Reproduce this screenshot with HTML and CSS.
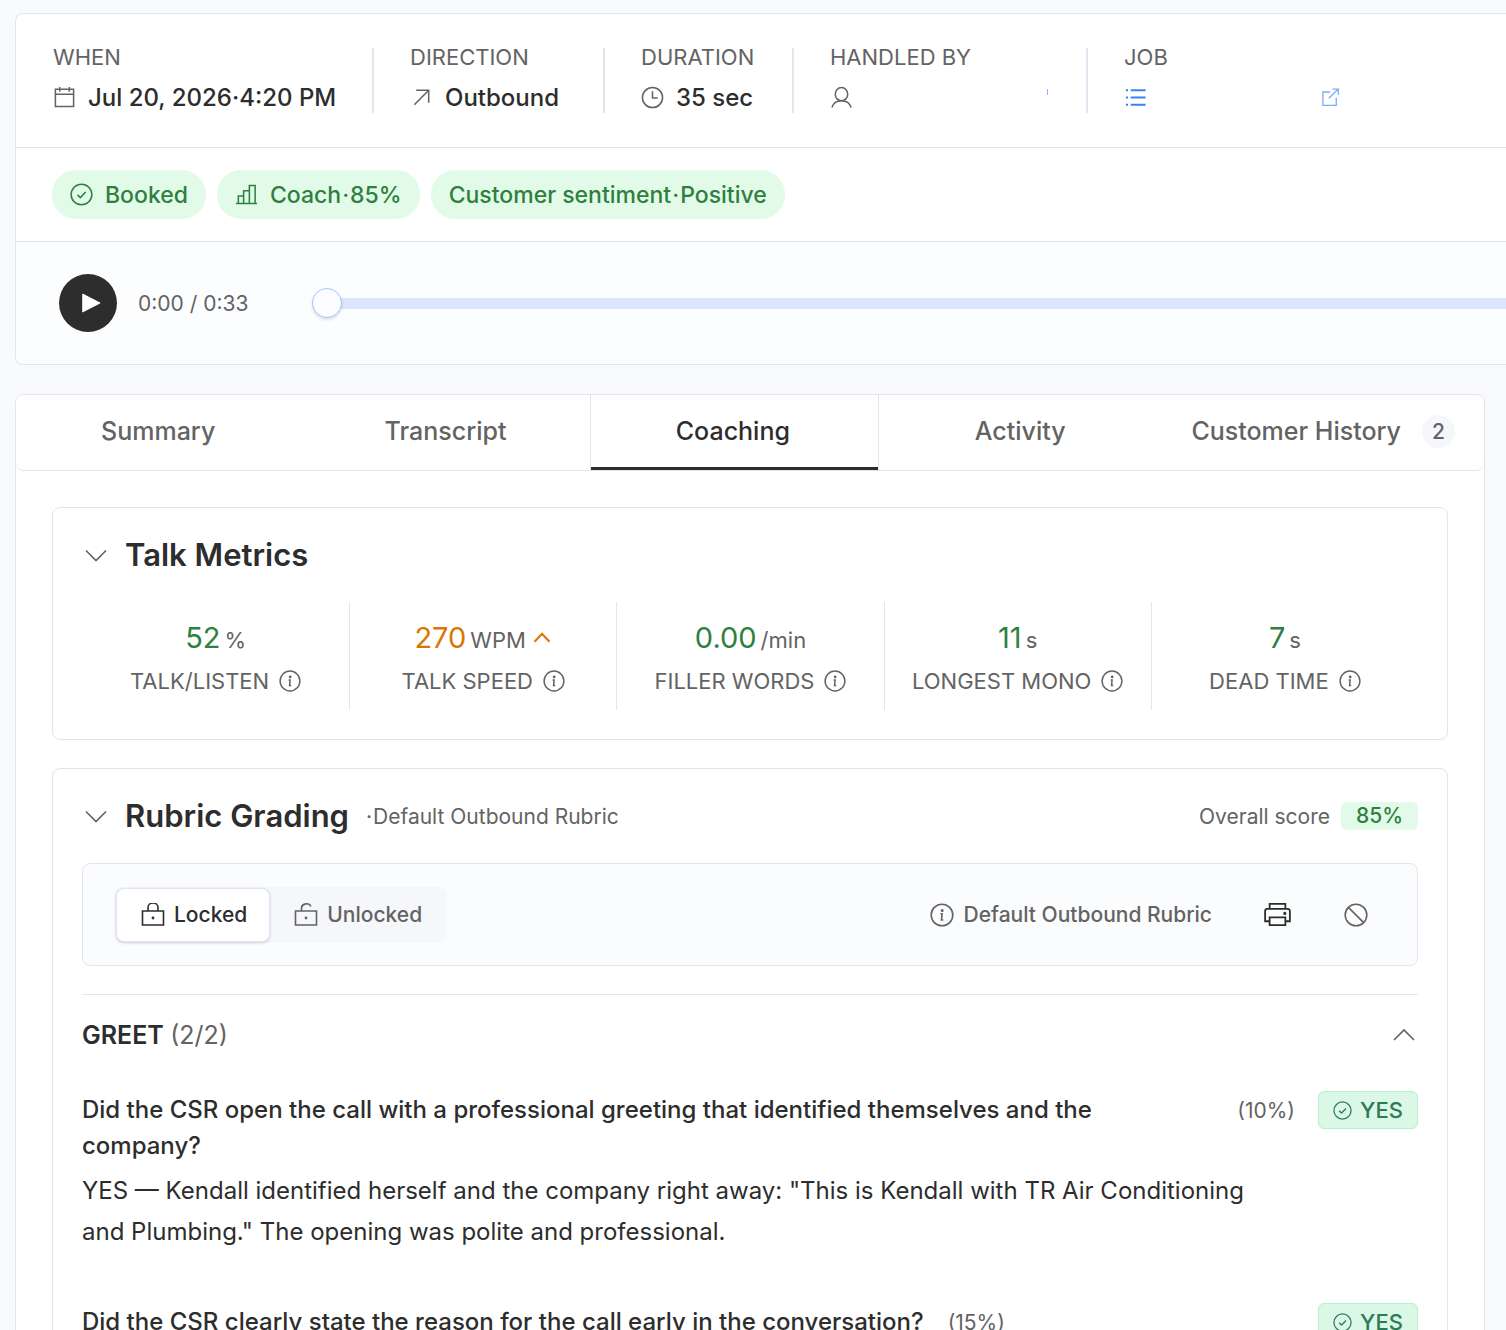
FILE: index.html
```html
<!DOCTYPE html>
<html lang="en">
<head>
  <meta charset="UTF-8" />
  <meta name="viewport" content="width=device-width, initial-scale=1.0"/>
  <title>Call details</title>
  <link rel="stylesheet" href="styles.css">
</head>
<body>
  <!-- Shared icons -->
  <svg class="sprite" aria-hidden="true">
    <symbol id="i-info" viewBox="0 0 24 24">
      <circle cx="12" cy="12" r="10.8"/>
      <path d="M10.5 10.8h1.6L11.5 17h1.8"/>
      <circle cx="12.2" cy="7.6" r=".7"/>
    </symbol>
    <symbol id="i-check" viewBox="0 0 24 24">
      <circle cx="12" cy="12" r="10.8"/>
      <path d="M7.8 12.4l3 2.8 5.6-5.8"/>
    </symbol>
    <symbol id="i-down" viewBox="0 0 24 24"><path d="M2 7.5l10 10 10-10"/></symbol>
    <symbol id="i-up" viewBox="0 0 24 24"><path d="M2 17l10-10 10 10"/></symbol>
  </svg>

  <main class="page">
    <section class="card call-card">
      <div class="facts">
        <div class="fact">
          <div class="label">WHEN</div>
          <div class="value">
            <svg class="icon" viewBox="0 0 24 24"><path d="M2.5 3.5h19v18h-19zM2.5 8.5h19M7 1v5M17 1v5"/></svg>
            <span>Jul 20, 2026·4:20 PM</span>
          </div>
        </div>
        <div class="fact">
          <div class="label">DIRECTION</div>
          <div class="value">
            <svg class="icon" viewBox="0 0 24 24"><path d="M4.5 19.5l15-15M6.5 4.5h13v13"/></svg>
            <span>Outbound</span>
          </div>
        </div>
        <div class="fact">
          <div class="label">DURATION</div>
          <div class="value">
            <svg class="icon" viewBox="0 0 24 24"><circle cx="12" cy="12" r="10.5"/><path d="M12 5.5v7h5.5"/></svg>
            <span>35 sec</span>
          </div>
        </div>
        <div class="fact">
          <div class="label">HANDLED BY</div>
          <div class="value">
            <svg class="icon" viewBox="0 0 24 24"><ellipse cx="12" cy="8.5" rx="6.5" ry="7"/><path d="M2 22.5c1.500-5 5.500-7.200 10-7.200s8.500 2.200 10 7.200"/></svg>
            <span class="handler-mark"></span>
          </div>
        </div>
        <div class="fact">
          <div class="label">JOB</div>
          <a href="#" class="value job-link" aria-label="Open job">
            <svg class="icon" viewBox="0 0 24 24"><path d="M7 4.500h15.500M7 12h15.500M7 19.500h15.500M2 4.500h2.200M2 12h2.200M2 19.500h2.200" stroke-width="2"/></svg>
            <svg class="icon icon-open" viewBox="0 0 24 24"><path d="M12 6H3.500v16h16V13M10.500 13.500L22 2.500M15 2.500h7v7"/></svg>
          </a>
        </div>
      </div>

      <div class="pills">
        <span class="pill"><svg class="icon" viewBox="0 0 24 24"><use href="#i-check"/></svg>Booked</span>
        <span class="pill">
          <svg class="icon" viewBox="0 0 24 24"><path d="M1 21.500h22M3.500 21.500v-8H9M9 21.500V8h6M15 21.500V2.500h6v19"/></svg>
          <span>Coach<span class="dot">·</span>85%</span>
        </span>
        <span class="pill"><span>Customer sentiment<span class="dot">·</span>Positive</span></span>
      </div>

      <div class="player">
        <button class="play-btn" aria-label="Play">
          <svg viewBox="0 0 24 24"><path d="M5 4.500v15L19.500 12z"/></svg>
        </button>
        <span class="time">0:00 / 0:33</span>
        <input class="seek" type="range" min="0" max="33" value="0" aria-label="Seek">
      </div>
    </section>

    <section class="card detail-card">
      <nav class="tabs">
        <button class="tab">Summary</button>
        <button class="tab">Transcript</button>
        <button class="tab active">Coaching</button>
        <button class="tab">Activity</button>
        <button class="tab">Customer History <span class="count">2</span></button>
      </nav>

      <div class="detail-body">
        <section class="panel">
          <header class="panel-head">
            <button class="toggle" aria-label="Collapse talk metrics"><svg class="icon" viewBox="0 0 24 24"><use href="#i-down"/></svg></button>
            <h2>Talk Metrics</h2>
          </header>
          <div class="metrics">
            <div class="metric">
              <div class="figure"><b>52</b>%</div>
              <div class="metric-label">TALK/LISTEN <svg class="icon" viewBox="0 0 24 24"><use href="#i-info"/></svg></div>
            </div>
            <div class="metric">
              <div class="figure"><b class="warn">270</b>WPM <svg class="icon warn" viewBox="0 0 24 24"><path d="M3 16.500l9-9.500 9 9.500"/></svg></div>
              <div class="metric-label">TALK SPEED <svg class="icon" viewBox="0 0 24 24"><use href="#i-info"/></svg></div>
            </div>
            <div class="metric">
              <div class="figure"><b>0.00</b>/min</div>
              <div class="metric-label">FILLER WORDS <svg class="icon" viewBox="0 0 24 24"><use href="#i-info"/></svg></div>
            </div>
            <div class="metric">
              <div class="figure"><b>11</b>s</div>
              <div class="metric-label">LONGEST MONO <svg class="icon" viewBox="0 0 24 24"><use href="#i-info"/></svg></div>
            </div>
            <div class="metric">
              <div class="figure"><b>7</b>s</div>
              <div class="metric-label">DEAD TIME <svg class="icon" viewBox="0 0 24 24"><use href="#i-info"/></svg></div>
            </div>
          </div>
        </section>

        <section class="panel">
          <header class="panel-head">
            <button class="toggle" aria-label="Collapse rubric grading"><svg class="icon" viewBox="0 0 24 24"><use href="#i-down"/></svg></button>
            <h2>Rubric Grading</h2>
            <span class="muted"><span class="dot">·</span>Default Outbound Rubric</span>
            <span class="overall muted">Overall score <span class="score">85%</span></span>
          </header>

          <div class="toolbar">
            <div class="segmented">
              <button class="segment selected" aria-pressed="true">
                <svg class="icon" viewBox="0 0 24 24"><path d="M1.500 8h21v14h-21zM7 8V4.500a5 4.500 0 0 1 10 0V8"/><circle cx="12" cy="15" r=".6"/></svg>
                Locked
              </button>
              <button class="segment" aria-pressed="false">
                <svg class="icon" viewBox="0 0 24 24"><path d="M1.500 8h21v14h-21zM7.500 8V4.500a5 4.500 0 0 1 9.500-1"/><circle cx="12" cy="15" r=".6"/></svg>
                Unlocked
              </button>
            </div>
            <span class="rubric-name"><svg class="icon" viewBox="0 0 24 24"><use href="#i-info"/></svg>Default Outbound Rubric</span>
            <button class="tool dark" aria-label="Print">
              <svg class="icon" viewBox="0 0 24 24"><path d="M5 7V2.500h14V7M5 18H1V9a2 2 0 0 1 2-2h18a2 2 0 0 1 2 2v9H19M5 14.500h14v7H5z"/><circle cx="18.500" cy="11" r=".6"/></svg>
            </button>
            <button class="tool" aria-label="Clear">
              <svg class="icon" viewBox="0 0 24 24"><circle cx="12" cy="12" r="10.8"/><path d="M4.400 4.400l15.200 15.200"/></svg>
            </button>
          </div>

          <div class="group">
            <header class="group-head">
              <h3>GREET <span>(2/2)</span></h3>
              <button class="toggle" aria-label="Collapse greet"><svg class="icon" viewBox="0 0 24 24"><use href="#i-up"/></svg></button>
            </header>

            <article class="question">
              <div class="question-text">
                <div class="question-title">
                  <h4>Did the CSR open the call with a professional greeting that identified themselves and the company?</h4>
                  <span class="weight">(10%)</span>
                </div>
                <p>YES — Kendall identified herself and the company right away: "This is Kendall with TR Air Conditioning and Plumbing." The opening was polite and professional.</p>
              </div>
              <span class="answer"><svg class="icon" viewBox="0 0 24 24"><use href="#i-check"/></svg>YES</span>
            </article>

            <article class="question">
              <div class="question-text">
                <div class="question-title">
                  <h4>Did the CSR clearly state the reason for the call early in the conversation?</h4>
                  <span class="weight">(15%)</span>
                </div>
              </div>
              <span class="answer"><svg class="icon" viewBox="0 0 24 24"><use href="#i-check"/></svg>YES</span>
            </article>
          </div>
        </section>
      </div>
    </section>
  </main>
</body>
</html>
```

FILE: styles.css
```css
* {
  box-sizing: border-box;
}

body {
  margin: 0;
  height: 100vh;
  overflow: hidden;
  font-family: Inter, "Liberation Sans", sans-serif;
  font-size: 24px;
  background: #f8fafc;
  color: #2d2d2d;
}

button {
  font: inherit;
  color: inherit;
  background: none;
  border: none;
  padding: 0;
  cursor: pointer;
}

h2, h3, h4, p {
  margin: 0;
}

.sprite {
  display: none;
}

.icon {
  width: 24px;
  height: 24px;
  flex: none;
  fill: none;
  stroke: currentColor;
  stroke-width: 1.6;
}

.dot {
  margin: 0 1px;
}

.muted {
  font-size: 21px;
  color: #636363;
}

.page {
  display: flex;
  flex-direction: column;
  gap: 29px;
  padding: 13px 0 0 15px;
}

.card {
  background: #fff;
  border: 1px solid #e2e5ee;
  border-radius: 8px;
}

/* Call summary, runs off the right edge */
.call-card {
  border-right: none;
  border-radius: 8px 0 0 8px;
}

.facts {
  display: grid;
  grid-template-columns: 319px 231px 189px 294px 1fr;
  padding: 34px 37px;
}

.fact + .fact {
  padding-left: 36px;
  border-left: 2px solid #e2e5ee;
}

.label {
  font-size: 22px;
  line-height: 18px;
  margin-bottom: 15px;
  color: #636363;
}

.value {
  display: flex;
  align-items: center;
  gap: 12px;
  height: 32px;
  font-weight: 500;
}

.value .icon {
  width: 23px;
  height: 23px;
  color: #636363;
}

.handler-mark {
  width: 1px;
  height: 6px;
  margin: 0 38px 10px auto;
  background: #8bb4fb;
}

.value.job-link {
  width: 216px;
  justify-content: space-between;
}

.job-link .icon {
  color: #3b82f6;
}

.job-link .icon-open {
  width: 20px;
  height: 20px;
  color: #7eacfa;
}

.pills {
  display: flex;
  gap: 11px;
  padding: 22px 36px;
  border-top: 1px solid #e2e5ee;
}

.pill {
  display: flex;
  align-items: center;
  gap: 12px;
  height: 49px;
  padding: 0 18px;
  border-radius: 24px;
  font-size: 23px;
  font-weight: 500;
  background: #e2fbe8;
  color: #2f803e;
}

.pill .icon {
  width: 23px;
  height: 23px;
}

.player {
  display: flex;
  align-items: center;
  height: 123px;
  padding-left: 43px;
  border-top: 1px solid #e2e5ee;
  border-radius: 0 0 0 8px;
  background: #fcfdff;
}

.play-btn {
  display: flex;
  align-items: center;
  justify-content: center;
  width: 58px;
  height: 58px;
  padding-left: 6px;
  border-radius: 50%;
  background: #2d2d2d;
}

.play-btn svg {
  width: 28px;
  height: 28px;
  fill: #fff;
  stroke: #fff;
  stroke-linejoin: round;
}

.time {
  width: 195px;
  padding-left: 21px;
  font-size: 21px;
  color: #636363;
}

.seek {
  flex: 1;
  height: 30px;
  margin: 0;
  appearance: none;
  background: linear-gradient(#dbe6fe, #dbe6fe) 15px center / 100% 11px no-repeat;
}

.seek::-webkit-slider-thumb {
  appearance: none;
  width: 30px;
  height: 30px;
  border: 1px solid #a6c5fb;
  border-radius: 50%;
  background: #fcfdff;
  box-shadow: 0 2px 3px rgba(0, 0, 0, 0.12);
}

/* Tabs */
.detail-card {
  margin-right: 21px;
}

.tabs {
  display: flex;
  height: 76px;
  border-bottom: 1px solid #e2e5ee;
  border-radius: 8px;
}

.tab {
  display: flex;
  flex: 1;
  align-items: center;
  justify-content: center;
  gap: 21px;
  padding: 0 29px 3px 26px;
  font-size: 25px;
  font-weight: 500;
  white-space: nowrap;
  color: #636363;
}

.tab.active {
  margin: 0 -1px;
  border: 1px solid #e2e5ee;
  border-width: 0 1px;
  box-shadow: inset 0 -3px #2d2d2d;
  color: #2d2d2d;
}

.count {
  width: 33px;
  line-height: 33px;
  border-radius: 50%;
  font-size: 21px;
  text-align: center;
  background: #f5f7fb;
}

.detail-body {
  display: flex;
  flex-direction: column;
  gap: 28px;
  padding: 36px;
}

.panel {
  padding: 29px;
  border: 1px solid #e2e5ee;
  border-radius: 8px;
}

.panel-head {
  display: flex;
  align-items: center;
  height: 36px;
}

.panel-head h2 {
  margin: 0 16px 2px 15px;
  font-size: 31px;
  font-weight: 600;
}

.toggle {
  display: flex;
  width: 28px;
  justify-content: center;
  color: #636363;
}

.metrics {
  display: grid;
  grid-template-columns: repeat(5, 1fr);
  margin-top: 29px;
}

.metric {
  height: 108px;
  padding-top: 18px;
  text-align: center;
  color: #636363;
}

.metric + .metric {
  border-left: 1px solid #e2e5ee;
}

.figure {
  font-size: 22px;
  line-height: 36px;
}

.figure b {
  margin-right: 4px;
  font-size: 29px;
  font-weight: 400;
  color: #2f803e;
}

.figure .warn {
  color: #d97706;
}

.figure .icon {
  width: 20px;
  height: 20px;
  stroke-width: 2.5;
}

.metric-label {
  display: flex;
  align-items: center;
  justify-content: center;
  gap: 10px;
  margin-top: 7px;
  font-size: 22px;
  line-height: 32px;
}

.metric-label .icon {
  width: 22px;
  height: 22px;
}

.overall {
  display: flex;
  align-items: center;
  gap: 11px;
  margin-left: auto;
}

.score {
  width: 77px;
  border-radius: 6px;
  line-height: 28px;
  font-weight: 500;
  text-align: center;
  background: #e2fbe8;
  color: #2f803e;
}

.toolbar {
  display: flex;
  align-items: center;
  gap: 21px;
  height: 103px;
  margin-top: 29px;
  padding: 0 32px;
  border: 1px solid #e2e5ee;
  border-radius: 8px;
  background: #fbfcfe;
  font-size: 21px;
  font-weight: 500;
  color: #636363;
}

.segmented {
  display: flex;
  margin-right: auto;
  padding: 1px;
  border-radius: 8px;
  background: #f5f7fb;
}

.segment {
  display: flex;
  align-items: center;
  gap: 9px;
  height: 54px;
  padding: 0 24px;
  border-radius: 8px;
}

.segment.selected {
  padding: 0 22px 0 24px;
  border: 1px solid #e0e5f0;
  background: #fff;
  box-shadow: 0 1px 3px rgba(30, 50, 100, 0.2);
  color: #2d2d2d;
}

.rubric-name {
  display: flex;
  align-items: center;
  gap: 10px;
  margin-right: 15px;
}

.tool {
  display: flex;
  justify-content: center;
  width: 58px;
}

.tool.dark {
  color: #2d2d2d;
}

.tool.dark .icon {
  width: 27px;
  height: 27px;
}

.group {
  margin-top: 28px;
  padding-top: 22px;
  border-top: 1px solid #e2e5ee;
}

.group-head {
  display: flex;
  align-items: center;
  justify-content: space-between;
  height: 36px;
  margin-bottom: 38px;
}

.group-head h3 {
  font-size: 25px;
  font-weight: 600;
}

.group-head h3 span {
  font-weight: 400;
  color: #636363;
}

.question {
  display: flex;
  align-items: flex-start;
  gap: 23px;
  margin-bottom: 51px;
}

.question-text {
  flex: 1;
}

.question-title {
  display: flex;
  padding-top: 1px;
}

.question-title h4 {
  padding-right: 24px;
  font-size: 24px;
  line-height: 36px;
  font-weight: 500;
}

.weight {
  font-size: 21px;
  line-height: 38px;
  color: #636363;
}

.question p {
  margin-top: 6px;
  padding-right: 12px;
  line-height: 41px;
}

.answer {
  display: flex;
  align-items: center;
  justify-content: center;
  gap: 8px;
  width: 100px;
  height: 38px;
  border: 1px solid #b8f0d0;
  border-radius: 6px;
  font-size: 22px;
  font-weight: 500;
  background: #dbf8e6;
  color: #2b7a58;
}

.answer .icon {
  width: 19px;
  height: 19px;
}
```
